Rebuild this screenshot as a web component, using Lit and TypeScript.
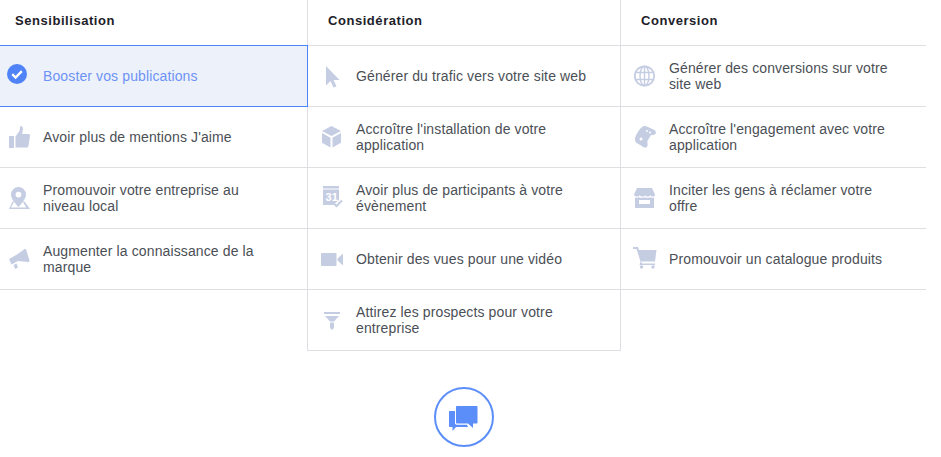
import { LitElement, html, css, svg } from 'lit';
import { customElement } from 'lit/decorators.js';
import { classMap } from 'lit/directives/class-map.js';

// all icons share a 24x24 box, centred on the row
const icons = {
  check: svg`<circle cx="11" cy="10" r="10" fill="#4f83f7" /><path d="M6.2 10.2l3.4 3.3 6.2-6.4" fill="none" stroke="#fff" stroke-width="2.4" />`,
  thumb: svg`<path d="M3 11h5v12H3zM9.5 11.5l4-5.5.8-5c1.8-.2 2.8 1.2 2.6 3l-.7 5h6.6c1 0 1.4 1 1.2 2l-1.6 10c-.2 1-1 1.6-2 1.6H9.5z" />`,
  pin: svg`<path fill-rule="evenodd" d="M12.5 1a7.5 7.5 0 0 1 7.500 7.500c0 4.300-4.500 9-7.500 12.500C9.500 17.500 5 12.800 5 8.500A7.500 7.500 0 0 1 12.500 1zm0 4.700a2.900 2.900 0 1 0 0 5.800 2.900 2.900 0 0 0 0-5.800z" /><path d="M6.500 15.500h1.800l-3.500 6H20.200l-3.500-6h1.800L24 23H3z" />`,
  megaphone: svg`<path d="M18 2.500c1-.8 2-.3 2.400.8l3 10c.3 1.200-.4 2-1.600 1.800L12 14l-6.500 3.500L3 12l8-4.500zM7.500 18l3-1.500 1.500 4-2.800 1.500z" />`,
  cursor: svg`<path d="M7 2l13.500 14h-6l3 6.500-3 1-3-6.500-4.500 4.500z" />`,
  box: svg`<path d="M12.500 1l9.500 5-9.500 5L3 6zM3 8l8.500 4.700V22.500L3 17.700zM22 8v9.700l-8.500 4.800V12.700z" />`,
  calendar: svg`<path d="M4 0h16v2.500H4zM4 3.500h16V14l-6 5H4z" /><text x="6.500" y="15" font-size="11" font-family="Liberation Sans, sans-serif" font-weight="700" fill="#fff">31</text><path d="M14.500 17.200l3 2.800 5.500-5.500" fill="none" stroke="#c5cde3" stroke-width="2" />`,
  video: svg`<path d="M2 7c0-.6.4-1 1-1h13.500c.6 0 1 .4 1 1v11c0 .6-.4 1-1 1H3c-.6 0-1-.4-1-1zM18.500 11.500L24 6.500v12l-5.500-5z" />`,
  funnel: svg`<path d="M5 4h16v2H5zM6 8h14l-5 5.500H11zM11 14.500h4V20l-2 2-2-2z" />`,
  globe: svg`<circle cx="12.500" cy="12" r="9.700" fill="none" stroke="#c5cde3" stroke-width="1.800" /><ellipse cx="12.500" cy="12" rx="4.500" ry="9.700" fill="none" stroke="#c5cde3" stroke-width="1.400" /><path d="M12.500 2v20M3 8.500h19M3 15.500h19" fill="none" stroke="#c5cde3" stroke-width="1.400" />`,
  gamepad: svg`<path fill-rule="evenodd" d="M11 1.500c1.500-.8 3-.5 4.500.2l6.500 3c1.500.8 2.300 2 1.800 3.500-.4 1.200-1.700 1.800-3 1.700l-2 .3-3.500 6 .3 3c.1 1.700-.6 3-1.900 3.300-1.500.4-3-.6-4.200-1.800L4.500 18c-1.400-1.500-1.800-3-1.400-5 .5-2.500 3.300-7 5-9.200.9-1.100 1.800-1.700 2.900-2.300zm4 3.500a1 1 0 1 0 0 2 1 1 0 0 0 0-2zm3 1.500a1 1 0 1 0 0 2 1 1 0 0 0 0-2zm-9 6a1.500 1.500 0 1 0 0 3 1.500 1.500 0 0 0 0-3z" />`,
  store: svg`<path d="M5 2h15l3 6.500c0 1.500-1 2-2.200 2s-2-.5-2.600-1.300c-.6.800-1.500 1.300-2.700 1.300s-2-.5-2.500-1.300c-.5.800-1.300 1.300-2.500 1.300s-2.100-.5-2.700-1.300c-.6.800-1.400 1.300-2.600 1.300S2 10 2 8.500z" /><path fill-rule="evenodd" d="M3 11.500c1.500.6 2.800.3 3.800-.3 1.600.8 3.500.8 5.700 0 2 .8 4 .8 5.700 0 1 .6 2.300.9 3.800.3V22H3zm4 2.500v4h11v-4z" />`,
  cart: svg`<path d="M1 0h5l1 3h17.500l-1.500 11.500H9L10 16.500h13v1.500H7.500l1-3.500L4.500 2H1z" /><circle cx="9.500" cy="20" r="1.700" /><circle cx="21" cy="20" r="1.700" />`,
};

type IconName = keyof typeof icons;

interface Objective {
  icon: IconName;
  label: string;
  selected?: boolean;
}

interface Column {
  title: string;
  items: Objective[];
}

const columns: Column[] = [
  {
    title: 'Sensibilisation',
    items: [
      { icon: 'check', label: 'Booster vos publications', selected: true },
      { icon: 'thumb', label: "Avoir plus de mentions J'aime" },
      { icon: 'pin', label: 'Promouvoir votre entreprise au niveau local' },
      { icon: 'megaphone', label: 'Augmenter la connaissance de la marque' },
    ],
  },
  {
    title: 'Considération',
    items: [
      { icon: 'cursor', label: 'Générer du trafic vers votre site web' },
      { icon: 'box', label: "Accroître l'installation de votre application" },
      { icon: 'calendar', label: 'Avoir plus de participants à votre évènement' },
      { icon: 'video', label: 'Obtenir des vues pour une vidéo' },
      { icon: 'funnel', label: 'Attirez les prospects pour votre entreprise' },
    ],
  },
  {
    title: 'Conversion',
    items: [
      { icon: 'globe', label: 'Générer des conversions sur votre site web' },
      { icon: 'gamepad', label: "Accroître l'engagement avec votre application" },
      { icon: 'store', label: 'Inciter les gens à réclamer votre offre' },
      { icon: 'cart', label: 'Promouvoir un catalogue produits' },
    ],
  },
];

@customElement('app-root')
export class AppRoot extends LitElement {
  static styles = css`
    :host {
      display: block;
      width: 941px;
      height: 457px;
      overflow: hidden;
      background: #fff;
      font-family: 'Liberation Sans', Arial, sans-serif;
      color: #4b4f56;
    }

    .grid {
      display: grid;
      grid-template-columns: 307px 314px 305px;
      width: 926px;
    }

    .col:nth-child(2) {
      border-left: 1px solid #dddfe2;
      border-right: 1px solid #dddfe2;
      border-bottom: 1px solid #dddfe2;
    }

    .head {
      box-sizing: border-box;
      height: 46px;
      padding: 13px 0 0 20px;
      border-bottom: 1px solid #dddfe2;
      font-size: 13px;
      line-height: 16px;
      font-weight: 700;
      letter-spacing: 0.55px;
      color: #1d2129;
    }

    .col:first-child .head {
      padding-left: 15px;
    }

    .row {
      box-sizing: border-box;
      display: flex;
      align-items: center;
      gap: 13px;
      height: 61px;
      padding: 0 30px 0 11px;
      border-bottom: 1px solid #dddfe2;
      font-size: 14px;
      line-height: 16px;
      letter-spacing: 0.12px;
    }

    .col:first-child .row {
      padding-left: 6px;
    }

    .col:nth-child(2) .row:last-child {
      border-bottom: none;
      height: 60px;
    }

    .row.selected {
      position: relative;
      height: 62px;
      margin: -1px -1px 0 0;
      border: 1px solid #4c84f5;
      border-left: none;
      background: #edf1f9;
      color: #6e93f7;
    }

    .row svg {
      flex: none;
      width: 24px;
      height: 24px;
      fill: #c5cde3;
      overflow: visible;
    }

    .chat {
      display: flex;
      justify-content: center;
      width: 926px;
      margin: 36px 0 0 1px;
    }

    .bubble {
      box-sizing: border-box;
      display: flex;
      align-items: center;
      justify-content: center;
      width: 60px;
      height: 60px;
      border: 2px solid #5b8ef9;
      border-radius: 50%;
    }

    .bubble svg {
      width: 30px;
      height: 28px;
      fill: #5b8ef9;
    }
  `;

  render() {
    return html`
      <div class="grid">
        ${columns.map(
          (col) => html`
            <section class="col">
              <div class="head">${col.title}</div>
              ${col.items.map(
                (item) => html`
                  <div class="row ${classMap({ selected: !!item.selected })}">
                    <svg viewBox="0 0 24 24">${icons[item.icon]}</svg>
                    <span>${item.label}</span>
                  </div>
                `,
              )}
            </section>
          `,
        )}
      </div>
      <div class="chat">
        <div class="bubble">
          <svg viewBox="0 0 30 28">
            <path d="M8 3h19.500c.6 0 1 .4 1 1v15.500c0 .6-.4 1-1 1H24V25l-5-4.500H8c-.6 0-1-.4-1-1V4c0-.6.4-1 1-1z" />
            <path d="M6 8v12c0 1 .8 1.700 1.700 1.700H18l1 2.300H7l-3.500 4v-4H1c-.6 0-1-.4-1-1V9c0-.6.4-1 1-1z" />
          </svg>
        </div>
      </div>
    `;
  }
}

declare global {
  interface HTMLElementTagNameMap {
    'app-root': AppRoot;
  }
}
